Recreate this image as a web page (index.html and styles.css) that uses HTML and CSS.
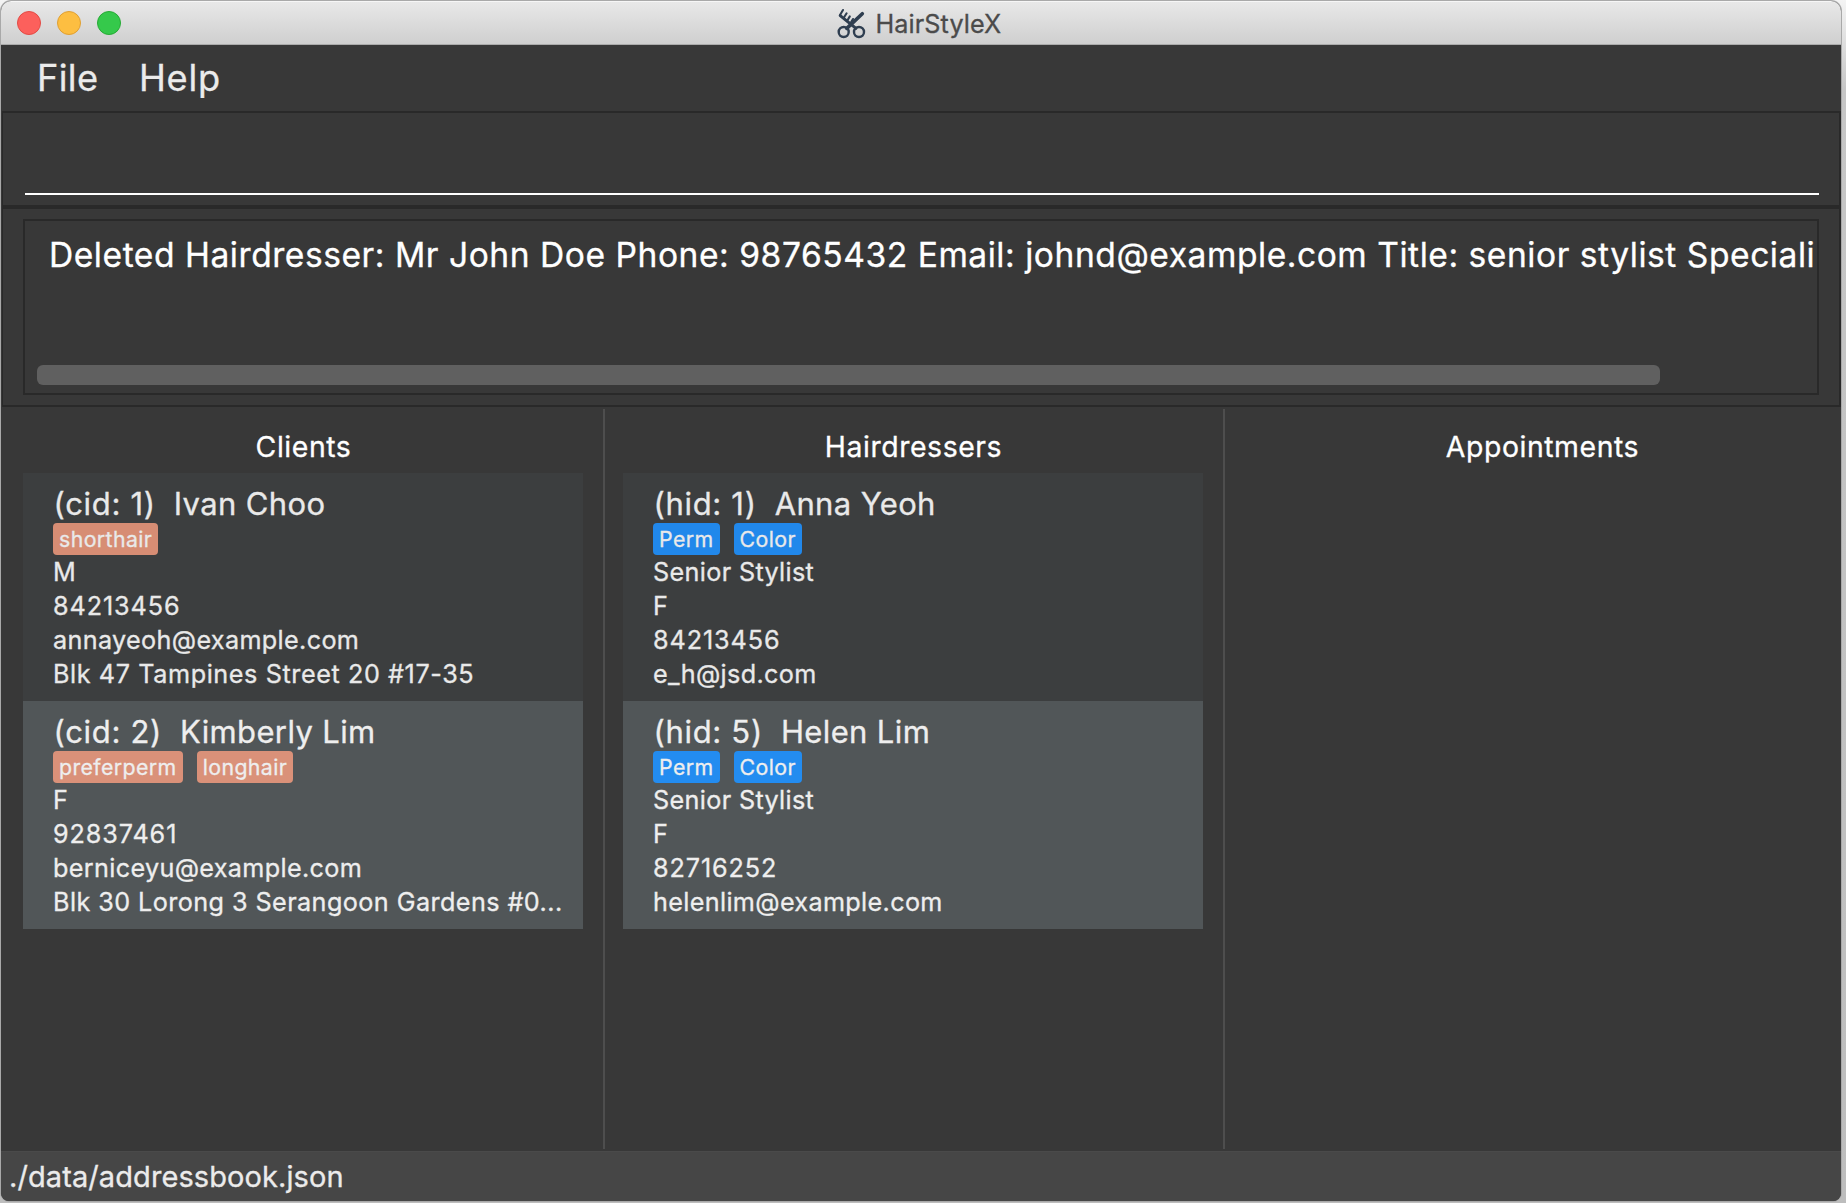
FILE: index.html
```html
<!DOCTYPE html>
<html lang="en">
<head>
<meta charset="utf-8">
<title>HairStyleX</title>
<link rel="stylesheet" href="styles.css">
</head>
<body>
<div class="window">
  <header class="titlebar">
    <div class="lights"><span class="light red"></span><span class="light yellow"></span><span class="light green"></span></div>
    <svg class="logo" width="30" height="34" viewBox="836 6 30 34" fill="none" stroke="#2f3e50" stroke-linecap="round">
      <circle cx="843.7" cy="32" r="5" stroke-width="2.4"/>
      <circle cx="859" cy="32" r="5" stroke-width="2.4"/>
      <path d="M862.3 13.7 846.8 28.4" stroke-width="3.6"/>
      <path d="M840.2 15.6 856 28.4" stroke-width="3"/>
      <path d="M840 15 843 10M843.6 18 846.6 13.3M847.2 20.8 849.8 16.4M850.6 23 853 19" stroke-width="2.1"/>
    </svg>
    <span class="title">HairStyleX</span>
  </header>

  <nav class="menubar"><span class="menu file">File</span><span class="menu help">Help</span></nav>

  <section class="command"><div class="command-field"></div></section>

  <section class="result">
    <div class="result-box">
      <div class="result-text">Deleted Hairdresser: Mr John Doe Phone: 98765432 Email: johnd@example.com Title: senior stylist Speciali</div>
      <div class="scrollbar"></div>
    </div>
  </section>

  <main class="panels">
    <section class="panel clients">
      <h2 class="heading">Clients</h2>
      <article class="card">
        <div class="name"><span class="id">(cid: 1)</span><span>Ivan Choo</span></div>
        <div class="tags"><span class="tag">shorthair</span></div>
        <div class="row">M</div>
        <div class="row digits">84213456</div>
        <div class="row">annayeoh@example.com</div>
        <div class="row address">Blk 47 Tampines Street 20 #17-35</div>
      </article>
      <article class="card alt">
        <div class="name"><span class="id">(cid: 2)</span><span>Kimberly Lim</span></div>
        <div class="tags"><span class="tag">preferperm</span><span class="tag">longhair</span></div>
        <div class="row">F</div>
        <div class="row digits">92837461</div>
        <div class="row">berniceyu@example.com</div>
        <div class="row clipped">Blk 30 Lorong 3 Serangoon Gardens #0...</div>
      </article>
    </section>
    <div class="divider"></div>
    <section class="panel hairdressers">
      <h2 class="heading">Hairdressers</h2>
      <article class="card">
        <div class="name"><span class="id">(hid: 1)</span><span>Anna Yeoh</span></div>
        <div class="tags"><span class="tag">Perm</span><span class="tag">Color</span></div>
        <div class="row">Senior Stylist</div>
        <div class="row">F</div>
        <div class="row digits">84213456</div>
        <div class="row">e_h@jsd.com</div>
      </article>
      <article class="card alt">
        <div class="name"><span class="id">(hid: 5)</span><span>Helen Lim</span></div>
        <div class="tags"><span class="tag">Perm</span><span class="tag">Color</span></div>
        <div class="row">Senior Stylist</div>
        <div class="row">F</div>
        <div class="row digits">82716252</div>
        <div class="row">helenlim@example.com</div>
      </article>
    </section>
    <div class="divider"></div>
    <section class="panel appointments">
      <h2 class="heading">Appointments</h2>
    </section>
  </main>

  <footer class="status">./data/addressbook.json</footer>
</div>
</body>
</html>
```
FILE: styles.css
```css
* { box-sizing: border-box; }
html, body { margin: 0; height: 100%; }
body {
  padding: 1px 5px 2px 1px;
  overflow: hidden;
  background: linear-gradient(#f4f4f4, #c6c6c6 90px, #bdbdbd);
  font-family: Inter, "Liberation Sans", sans-serif;
  -webkit-text-stroke: .3px;
}
.window {
  display: flex;
  flex-direction: column;
  height: 1200px;
  background: #383838;
  border-radius: 10px 10px 8px 8px;
  overflow: hidden;
  box-shadow: 0 0 0 1px #a9a9a9;
}

.titlebar {
  display: flex;
  align-items: center;
  height: 44px;
  flex: none;
  padding-left: 16px;
  background: linear-gradient(#e8e8e8, #cfcfcf);
  border-top: 1px solid #f6f6f6;
  border-bottom: 1px solid #ababab;
}
.lights { display: flex; gap: 16px; width: 819px; }
.light { width: 24px; height: 24px; border-radius: 50%; border: 1px solid; }
.red { background: #fc605c; border-color: #e24b45; }
.yellow { background: #fdbe41; border-color: #df9f33; }
.green { background: #35c94b; border-color: #27aa35; }
.logo { flex: none; }
.title { margin-left: 9.5px; padding-top: 2px; font-size: 25.2px; line-height: 42px; letter-spacing: .004em; color: #4b4b4b; }

.menubar { display: flex; flex: none; height: 66px; padding-left: 36px; }
.menu { font-size: 36.2px; line-height: 66px; color: #ebebeb; }
.file { width: 102px; letter-spacing: .01em; }
.help { letter-spacing: .02em; }

.command {
  flex: none;
  height: 96px;
  padding: 0 20px 0 22px;
  border: solid #292929;
  border-width: 2px 2px 2px 1px;
  margin-left: 1px;
}
.command-field { height: 82px; border-bottom: 2px solid #fff; }

.result {
  flex: none;
  height: 200px;
  margin-left: 1px;
  padding: 10px 20px 0 20px;
  border: solid #292929;
  border-width: 2px 2px 2px 1px;
}
.result-box {
  height: 176px;
  padding: 14px 0 0 12px;
  border: 2px solid #292929;
  overflow: hidden;
}
.result-text { padding-left: 12px; font-size: 33.6px; line-height: 40px; letter-spacing: .0158em; color: #fff; white-space: nowrap; }
.scrollbar { width: 1623px; height: 20px; margin-top: 90px; border-radius: 6px; background: #606060; }

.panels {
  display: grid;
  grid-template-columns: 602px 2px 618px 2px 1fr;
  height: 744px;
  flex: none;
  padding: 2px 0;
}
.divider { background: #4e4e4e; }
.panel { padding: 13px 20px 0 18px; }
.clients { padding-left: 22px; }
.appointments { padding-right: 0; }
.heading {
  height: 51px;
  margin: 0;
  padding-left: 1px;
  font-size: 28.4px;
  font-weight: 400;
  line-height: 50px;
  letter-spacing: .02em;
  text-align: center;
  color: #fff;
}
.card { height: 228px; padding: 10px 20px 10px 30px; background: #3c3e3f; color: #e9e9e9; }
.card.alt { background: #515658; color: #eee; }
.name { display: flex; gap: 18px; height: 40px; font-size: 31px; line-height: 41px; letter-spacing: .012em; white-space: nowrap; }
.id { padding-left: .5px; letter-spacing: .022em; }
.tags { display: flex; gap: 14px; height: 32px; }
.tag { padding: 0 6px; border-radius: 4px; font-size: 21.3px; line-height: 32px; letter-spacing: .019em; background: #d78d74; }
.alt .tag { background: #da9179; }
.hairdressers .tag { background: #2188eb; }
.hairdressers .alt .tag { background: #238cf0; }
.row { height: 34px; font-size: 25.2px; line-height: 34px; letter-spacing: .0135em; white-space: nowrap; }
.digits { letter-spacing: .036em; }
.address { letter-spacing: .0235em; }
.clipped { letter-spacing: .017em; }

.status {
  flex: 1;
  padding-left: 8px;
  border-top: 1px solid #4a4a4a;
  font-size: 29px;
  line-height: 49px;
  letter-spacing: .003em;
  background: #464646;
  color: #ebebeb;
}
```
